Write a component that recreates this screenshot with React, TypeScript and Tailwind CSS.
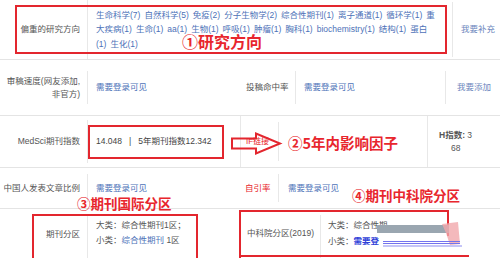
import React from "react";

const blue = "text-[#4d72b8]";

function Sep() {
  return <span className="inline-block w-[4px]" />;
}

export default function App() {
  const line1 = ["生命科学(7)", "自然科学(5)", "免疫(2)", "分子生物学(2)", "综合性期刊(1)", "离子通道(1)", "循环学(1)", "重"];
  const line2 = ["大疾病(1)", "生命(1)", "aa(1)", "生物(1)", "呼吸(1)", "肿瘤(1)", "胸科(1)", "biochemistry(1)", "结构(1)", "蛋白"];
  const line3 = ["(1)", "生化(1)"];
  const renderLine = (items: string[]) => (
    <div className="whitespace-nowrap">
      {items.map((t, i) => (
        <React.Fragment key={i}>
          {i > 0 && <Sep />}
          <span>{t}</span>
        </React.Fragment>
      ))}
    </div>
  );

  return (
    <div
      className="relative w-[500px] h-[258px] overflow-hidden bg-white text-[8.5px] text-[#555]"
      style={{ fontFamily: '"Liberation Sans", "Noto Sans CJK SC", sans-serif' }}
    >
      {/* Row 1 */}
      <div className="flex h-[60px] border-b border-[#e4e4e4]">
        <div className="w-[87px] shrink-0 flex items-center justify-end pr-[7px]">偏重的研究方向</div>
        <div className={`w-[365px] shrink-0 overflow-hidden border-l border-[#e8e8e8] pl-[8px] flex flex-col justify-center leading-[14.5px] ${blue}`}>
          {renderLine(line1)}
          {renderLine(line2)}
          {renderLine(line3)}
        </div>
        <div className="w-[48px] shrink-0 my-[2px] border-l border-[#e8e8e8] flex items-center pl-[8px] whitespace-nowrap text-[#6b86bd]">我要补充</div>
      </div>

      {/* Row 2 */}
      <div className="flex h-[56px] py-[11px] border-b border-[#e4e4e4]">
        <div className="w-[87px] flex flex-col justify-center items-end pr-[7px] leading-[13px] text-right">
          <div>审稿速度(网友添加,</div>
          <div>非官方)</div>
        </div>
        <div className={`w-[153px] border-l border-[#e8e8e8] pl-[8px] flex items-center ${blue}`}>需要登录可见</div>
        <div className="w-[55px] flex items-center pl-[6px]">投稿命中率</div>
        <div className={`w-[150px] border-l border-[#e8e8e8] pl-[8px] flex items-center ${blue}`}>需要登录可见</div>
        <div className="flex-1 border-l border-[#e8e8e8] pl-[11px] flex items-center whitespace-nowrap text-[#6b86bd]">我要添加</div>
      </div>

      {/* Row 3 */}
      <div className="flex h-[52px] border-b border-[#e4e4e4]">
        <div className="w-[87px] flex items-center justify-end pr-[7px]">MedSci期刊指数</div>
        <div className="w-[153px] my-[4px] border-l border-[#e8e8e8] pl-[8px] flex items-center text-[#444]">
          <span>14.048</span>
          <span className="mx-[7px]">|</span>
          <span>5年期刊指数12.342</span>
        </div>
        <div className="w-[38px] border-l border-[#e8e8e8] flex items-center pl-[5px] text-[#e8262d] text-[8px]">IF链接</div>
        <div className="w-[149px] my-[6px] border-l border-[#e8e8e8]" />
        <div className="flex-1 border-l border-[#e8e8e8] flex flex-col justify-center leading-[13px] font-bold text-[#555]">
          <div className="pl-[11px]">H指数: <span className="font-normal">3</span></div>
          <div className="pl-[23px] font-normal">68</div>
        </div>
      </div>

      {/* Row 4 */}
      <div className="flex h-[41px] py-[6px] border-b border-[#e4e4e4]">
        <div className="w-[87px] flex items-center justify-end pr-[7px]">中国人发表文章比例</div>
        <div className={`w-[153px] border-l border-[#e8e8e8] pl-[8px] flex items-center ${blue}`}>需要登录可见</div>
        <div className="w-[38px] flex items-center pl-[5px] text-[#e8262d]">自引率</div>
        <div className={`flex-1 border-l border-[#e8e8e8] pl-[9px] flex items-center ${blue}`}>需要登录可见</div>
      </div>

      {/* Row 5 */}
      <div className="flex h-[60px]">
        <div className="w-[87px] flex items-center justify-end pr-[7px] pt-[2px] pb-[12px]">期刊分区</div>
        <div className="w-[153px] my-[6px] border-l border-[#e8e8e8] pl-[8px] flex flex-col justify-center leading-[15px] pb-[12px] text-[#555]">
          <div>大类：综合性期刊1区；</div>
          <div>
            小类：<span className={blue}>综合性期刊</span> 1区
          </div>
        </div>
        <div className="w-[80px] flex items-center pl-[7px] pb-[12px]">中科院分区(2019)</div>
        <div className="flex-1 my-[6px] border-l border-[#e8e8e8] pl-[7px] flex flex-col justify-center leading-[16px] pb-[12px]">
          <div>大类：综合性期</div>
          <div>
            小类：<span className="text-[#2f3fd8] font-bold">需要登</span>
          </div>
        </div>
      </div>

      {/* Annotations */}
      <div className="absolute left-[15px] top-[5px] w-[432px] h-[49px] border-2 border-[#e3262e]" />
      <div
        className="absolute left-[182px] top-[33px] text-[16px] leading-[16px] font-bold text-[#e8262d]"
        style={{ fontFamily: '"Noto Sans CJK SC", sans-serif' }}
      >
        ①研究方向
      </div>

      <div className="absolute left-[88px] top-[125px] w-[136px] h-[34px] border-2 border-[#e3262e]" />
      <svg className="absolute left-[229px] top-[131px]" width="54" height="25" viewBox="0 0 54 25">
        <polygon points="3,7.5 27,7.5 27,2.5 51,12.5 27,22.5 27,17.5 3,17.5" fill="none" stroke="#e3262e" strokeWidth="2" />
      </svg>
      <div
        className="absolute left-[288px] top-[135px] text-[14.5px] leading-[15px] font-bold text-[#e8262d]"
        style={{ fontFamily: '"Noto Sans CJK SC", sans-serif' }}
      >
        ②5年内影响因子
      </div>

      <div
        className="absolute left-[77px] top-[196px] text-[13.5px] leading-[14px] font-bold text-[#e8262d]"
        style={{ fontFamily: '"Noto Sans CJK SC", sans-serif' }}
      >
        ③期刊国际分区
      </div>
      <div
        className="absolute left-[352px] top-[188px] text-[13.5px] leading-[14px] font-bold text-[#e8262d]"
        style={{ fontFamily: '"Noto Sans CJK SC", sans-serif' }}
      >
        ④期刊中科院分区
      </div>

      <div className="absolute left-[32px] top-[214px] w-[166px] h-[60px] border-2 border-[#e3262e]" />

      {/* box 4 partial */}
      <div className="absolute left-[239px] top-[210px] w-[210px] h-[48px] border-l-2 border-t-2 border-[#e3262e]" />
      <div className="absolute left-[447px] top-[210px] w-[2px] h-[26px] bg-[#e3262e]" />
      <div className="absolute left-[239px] top-[255px] w-[230px] h-[2px] bg-[#e3262e]" />

      <svg className="absolute left-[370px] top-[218px]" width="100" height="34" viewBox="0 0 100 34">
        <rect x="7" y="7" width="72" height="8" fill="#9aa6b0" />
        <polygon points="72,6 88,4 90,26 80,27 76,15" fill="#f1a7ab" opacity="0.8" />
        <line x1="13" y1="23.5" x2="90" y2="23.5" stroke="#7373ee" strokeWidth="1" />
        <line x1="13" y1="25.5" x2="90" y2="25.5" stroke="#7373ee" strokeWidth="1" />
        <line x1="13" y1="28" x2="92" y2="28" stroke="#8b8bf0" strokeWidth="1" />
      </svg>
    </div>
  );
}
